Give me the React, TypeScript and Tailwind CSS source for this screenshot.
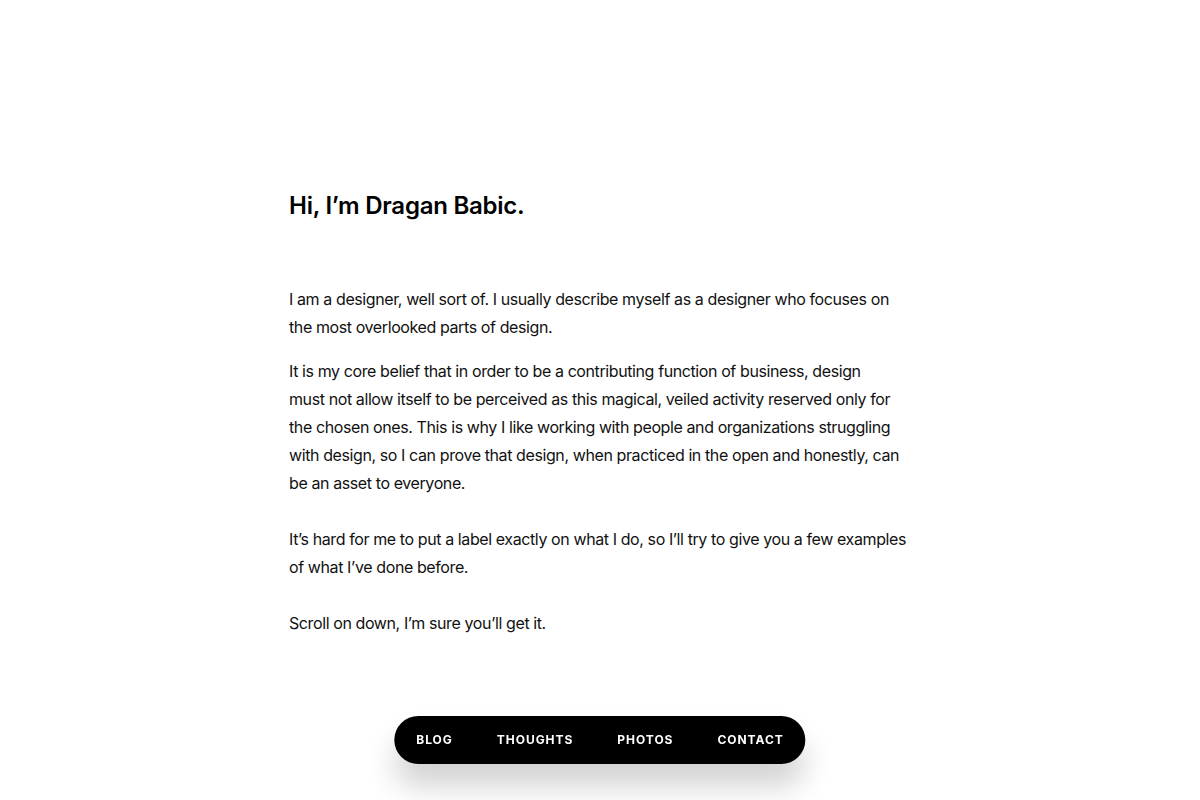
const navItems = ['Blog', 'Thoughts', 'Photos', 'Contact']

function FloatingNav() {
  return (
    <nav className="fixed bottom-[36px] left-1/2 -translate-x-1/2 h-12 rounded-full bg-black px-[22px] flex items-center gap-[44px] shadow-[0_22px_30px_rgba(0,0,0,0.18)]">
      {navItems.map((item) => (
        <a
          key={item}
          href="#"
          className="text-white text-[12px] font-bold uppercase tracking-[0.08em] leading-none"
        >
          {item}
        </a>
      ))}
    </nav>
  )
}

export default function App() {
  return (
    <div
      className="min-h-[800px] bg-white text-[#111]"
      style={{ fontFamily: 'Inter, "Noto Sans", sans-serif' }}
    >
      <main className="mx-auto w-[622px] pt-[190px] pb-[160px]">
        <h1 className="text-[24px] leading-8 font-semibold text-black tracking-[-0.01em]">
          Hi, I’m Dragan Babic.
        </h1>

        <div className="mt-[63px] text-[16px] leading-7 tracking-[-0.025em]">
          <p>
            I am a designer, well sort of. I usually describe myself as a designer who focuses on
            the most overlooked parts of design.
          </p>
          <p className="mt-4">
            It is my core belief that in order to be a contributing function of business, design
            <br />
            must not allow itself to be perceived as this magical, veiled activity reserved only for
            the chosen ones. This is why I like working with people and organizations struggling
            with design, so I can prove that design, when practiced in the open and honestly, can
            be an asset to everyone.
          </p>
          <p className="mt-7">
            It’s hard for me to put a label exactly on what I do, so I’ll try to give you a few
            examples of what I’ve done before.
          </p>
          <p className="mt-7">Scroll on down, I’m sure you’ll get it.</p>
        </div>
      </main>

      <FloatingNav />
    </div>
  )
}
